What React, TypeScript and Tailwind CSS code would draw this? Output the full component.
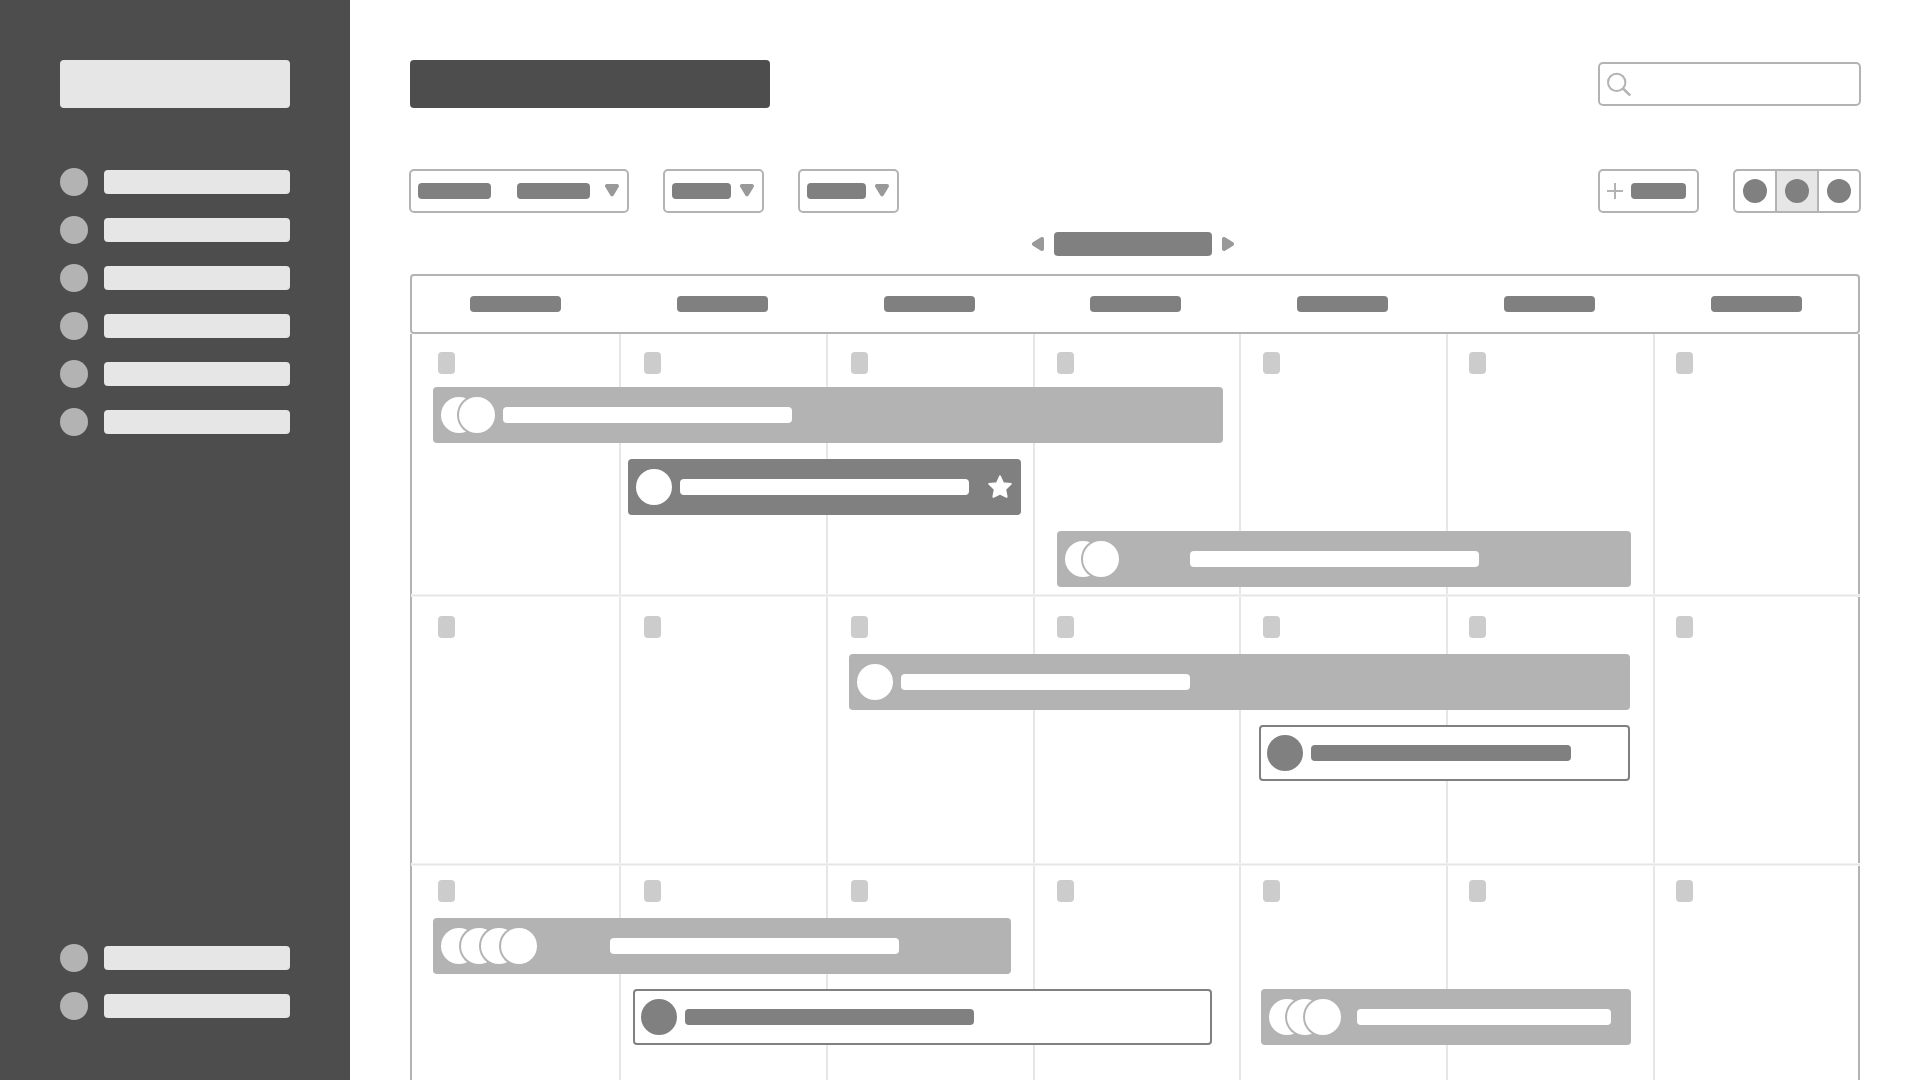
import React from "react";

type Tone = "light" | "dark" | "outline";

interface CalendarEvent {
  name: string;
  /** Distance from the left edge of the week, in pixels of a 1448px wide grid. */
  start: number;
  length: number;
  tone: Tone;
  people: number;
  label: string;
  starred?: boolean;
}

interface Week {
  name: string;
  className: string;
  laneGap: string;
  lanes: CalendarEvent[][];
}

const GRID_WIDTH = 1448;
const DAYS = ["Monday", "Tuesday", "Wednesday", "Thursday", "Friday", "Saturday", "Sunday"];
const NAV_MAIN = ["Home", "Calendar", "Projects", "Team", "Reports", "Files"];
const NAV_FOOT = ["Settings", "Help"];

const WEEKS: Week[] = [
  {
    name: "Week 1",
    className: "h-[260px] gap-[13px] pt-[18px]",
    laneGap: "gap-4",
    lanes: [
      [{ name: "Event 1", start: 21, length: 790, tone: "light", people: 2, label: "ml-2 w-[289px]" }],
      [{ name: "Event 2", start: 216, length: 393, tone: "dark", people: 1, label: "ml-2 w-[289px]", starred: true }],
      [{ name: "Event 3", start: 645, length: 574, tone: "light", people: 2, label: "ml-[71px] w-[289px]" }],
    ],
  },
  {
    name: "Week 2",
    className: "h-[266px] gap-4 pt-[19px]",
    laneGap: "gap-[15px]",
    lanes: [
      [{ name: "Event 4", start: 437, length: 781, tone: "light", people: 1, label: "ml-2 w-[289px]" }],
      [{ name: "Event 5", start: 847, length: 371, tone: "outline", people: 1, label: "ml-2 w-[260px]" }],
    ],
  },
  {
    name: "Week 3",
    className: "flex-1 gap-4 pt-[14px]",
    laneGap: "gap-[15px]",
    lanes: [
      [{ name: "Event 6", start: 21, length: 578, tone: "light", people: 4, label: "ml-[73px] w-[289px]" }],
      [
        { name: "Event 7", start: 221, length: 579, tone: "outline", people: 1, label: "ml-2 w-[289px]" },
        { name: "Event 8", start: 849, length: 370, tone: "light", people: 3, label: "ml-4 w-[254px]" },
      ],
    ],
  },
];

const EVENT_TONE: Record<Tone, string> = {
  light: "bg-[#b3b3b3] px-2",
  dark: "bg-[#808080] pr-[9px] pl-2",
  outline: "border-2 border-[#808080] bg-white px-1.5",
};

const RING_TONE: Record<Tone, string> = {
  light: "bg-white ring-[#b3b3b3]",
  dark: "bg-white ring-[#808080]",
  outline: "bg-[#808080] ring-white",
};

const LABEL_TONE: Record<Tone, string> = {
  light: "bg-white",
  dark: "bg-white",
  outline: "bg-[#808080]",
};

function NavItem({ name }: { name: string }) {
  return (
    <a href="#" aria-label={name} className="flex items-center gap-4">
      <span className="size-7 shrink-0 rounded-full bg-[#b3b3b3]" />
      <span className="h-6 flex-1 rounded bg-[#e6e6e6]" />
    </a>
  );
}

function DownArrow() {
  return (
    <svg className="h-3.5 w-3.5 shrink-0" viewBox="0 0 14 14" aria-hidden="true">
      <path d="M2 2H12L7 10.3Z" fill="#999" stroke="#999" strokeWidth="4" strokeLinejoin="round" />
    </svg>
  );
}

function SideArrow({ d }: { d: string }) {
  return (
    <svg className="h-3.5 w-3" viewBox="0 0 12 14" aria-hidden="true">
      <path d={d} fill="#999" stroke="#999" strokeWidth="4" strokeLinejoin="round" />
    </svg>
  );
}

function Filter({ name }: { name: string }) {
  return (
    <button
      type="button"
      aria-label={name}
      aria-haspopup="listbox"
      className="flex h-11 items-center gap-[9px] rounded-[5px] border-2 border-[#b3b3b3] pr-2 pl-[7px]"
    >
      <span className="h-4 w-[59px] rounded bg-[#808080]" />
      <DownArrow />
    </button>
  );
}

function Star() {
  return (
    <svg className="ml-auto size-6" viewBox="0 0 24 24" aria-hidden="true">
      <path
        d="M12 1.4L15 8.2L22.8 8.9L17.2 14.4L18.6 21.8L12 18.5L5.4 21.8L6.8 14.4L1.2 8.9L9 8.2Z"
        fill="#fff"
        stroke="#fff"
        strokeWidth="2"
        strokeLinejoin="round"
      />
    </svg>
  );
}

function EventBar({ event, offset }: { event: CalendarEvent; offset: number }) {
  return (
    <button
      type="button"
      aria-label={event.name}
      className={`flex h-14 shrink-0 items-center rounded ${EVENT_TONE[event.tone]}`}
      style={{
        marginLeft: `${(offset / GRID_WIDTH) * 100}%`,
        width: `${(event.length / GRID_WIDTH) * 100}%`,
      }}
    >
      <span className={`flex ${event.people > 3 ? "-space-x-4" : "-space-x-[18px]"}`}>
        {Array.from({ length: event.people }, (_, i) => (
          <span key={i} className={`size-9 rounded-full ring-2 ${RING_TONE[event.tone]}`} />
        ))}
      </span>
      <span className={`h-4 rounded ${LABEL_TONE[event.tone]} ${event.label}`} />
      {event.starred && <Star />}
    </button>
  );
}

function Lane({ events }: { events: CalendarEvent[] }) {
  let end = 0;
  return (
    <div className="flex">
      {events.map((event) => {
        const offset = event.start - end;
        end = event.start + event.length;
        return <EventBar key={event.name} event={event} offset={offset} />;
      })}
    </div>
  );
}

function Divider() {
  return <div className="-ml-px h-[3px] shrink-0 border-y border-[#f2f2f2] bg-[#e6e6e6]" />;
}

function Calendar() {
  return (
    <section aria-label="Calendar" className="mx-px mt-[18px] flex flex-1 flex-col">
      <div className="h-[60px] rounded border-2 border-[#b3b3b3]">
        <div className="-mr-0.5 grid h-full grid-cols-7 place-items-center">
          {DAYS.map((day) => (
            <div key={day} aria-label={day} className="h-4 w-[91px] rounded bg-[#808080]" />
          ))}
        </div>
      </div>
      <div className="grid flex-1 border-l-2 border-[#b3b3b3]">
        <div className="col-start-1 row-start-1 grid grid-cols-7">
          {DAYS.map((day) => (
            <div
              key={day}
              className="border-l-2 border-[#e6e6e6] first:border-l-0 last:border-r-2 last:border-r-[#b3b3b3]"
            />
          ))}
        </div>
        <div className="col-start-1 row-start-1 flex flex-col">
          {WEEKS.map((week, index) => (
            <React.Fragment key={week.name}>
              {index > 0 && <Divider />}
              <div className={`flex shrink-0 flex-col ${week.className}`}>
                <div className="mr-1 grid grid-cols-7">
                  {DAYS.map((day) => (
                    <div key={day} className="pl-[26px]">
                      <div className="h-[22px] w-[17px] rounded bg-[#ccc]" />
                    </div>
                  ))}
                </div>
                <div className={`flex flex-col ${week.laneGap}`}>
                  {week.lanes.map((lane) => (
                    <Lane key={lane[0].name} events={lane} />
                  ))}
                </div>
              </div>
            </React.Fragment>
          ))}
        </div>
      </div>
    </section>
  );
}

export default function App() {
  return (
    <div className="flex min-h-screen bg-white">
      <aside className="flex w-[350px] shrink-0 flex-col bg-[#4d4d4d] p-[60px]">
        <a href="#" aria-label="Logo" className="h-12 rounded bg-[#e6e6e6]" />
        <nav aria-label="Main" className="mt-[60px] flex flex-col gap-5">
          {NAV_MAIN.map((name) => (
            <NavItem key={name} name={name} />
          ))}
        </nav>
        <nav aria-label="Support" className="mt-auto flex flex-col gap-5">
          {NAV_FOOT.map((name) => (
            <NavItem key={name} name={name} />
          ))}
        </nav>
      </aside>

      <main className="flex min-w-0 flex-1 flex-col px-[59px] pt-[60px]">
        <header className="flex items-center justify-between">
          <h1 aria-label="Page title" className="ml-px h-12 w-[360px] rounded bg-[#4d4d4d]" />
          <label className="flex h-11 w-[263px] items-center rounded-[5px] border-2 border-[#b3b3b3] pr-2 pl-[7px]">
            <svg className="size-6 shrink-0" viewBox="0 0 24 24" fill="none" stroke="#b3b3b3" strokeWidth="2" aria-hidden="true">
              <circle cx="9.7" cy="10.4" r="8.7" />
              <path d="M16 16.5L23.3 23.5" strokeWidth="2.5" />
            </svg>
            <input type="search" aria-label="Search" className="ml-2 min-w-0 flex-1 bg-transparent outline-none" />
          </label>
        </header>

        <div className="mt-[61px] flex items-center justify-between">
          <div className="flex gap-[34px]">
            <button
              type="button"
              aria-label="Date range"
              aria-haspopup="listbox"
              className="flex h-11 items-center rounded-[5px] border-2 border-[#b3b3b3] pr-2 pl-[7px]"
            >
              <span className="mr-[26px] h-4 w-[73px] rounded bg-[#808080]" />
              <span className="mr-[15px] h-4 w-[73px] rounded bg-[#808080]" />
              <DownArrow />
            </button>
            <Filter name="Status" />
            <Filter name="Owner" />
          </div>
          <div className="flex gap-[34px]">
            <button
              type="button"
              aria-label="Add event"
              className="flex h-11 items-center gap-2 rounded-[5px] border-2 border-[#b3b3b3] pr-[11px] pl-[7px]"
            >
              <svg className="size-4" viewBox="0 0 16 16" stroke="#b3b3b3" strokeWidth="2" aria-hidden="true">
                <path d="M8 0V16M0 8H16" />
              </svg>
              <span className="h-4 w-[55px] rounded bg-[#808080]" />
            </button>
            <div
              role="group"
              aria-label="View"
              className="flex h-11 divide-x-2 divide-[#b3b3b3] overflow-hidden rounded-[5px] border-2 border-[#b3b3b3]"
            >
              <button type="button" aria-label="Day view" className="box-content flex w-10 items-center justify-center">
                <span className="size-6 rounded-full bg-[#808080]" />
              </button>
              <button
                type="button"
                aria-label="Month view"
                aria-pressed="true"
                className="box-content flex w-10 items-center justify-center bg-[#e6e6e6]"
              >
                <span className="size-6 rounded-full bg-[#808080]" />
              </button>
              <button type="button" aria-label="Year view" className="box-content flex w-10 items-center justify-center">
                <span className="size-6 rounded-full bg-[#808080]" />
              </button>
            </div>
          </div>
        </div>

        <div className="mt-[19px] flex items-center justify-center gap-2.5 pr-1">
          <button type="button" aria-label="Previous month">
            <SideArrow d="M10 2V12L2 7Z" />
          </button>
          <div aria-label="Current month" className="h-6 w-[158px] rounded bg-[#808080]" />
          <button type="button" aria-label="Next month">
            <SideArrow d="M2 2V12L10 7Z" />
          </button>
        </div>

        <Calendar />
      </main>
    </div>
  );
}
